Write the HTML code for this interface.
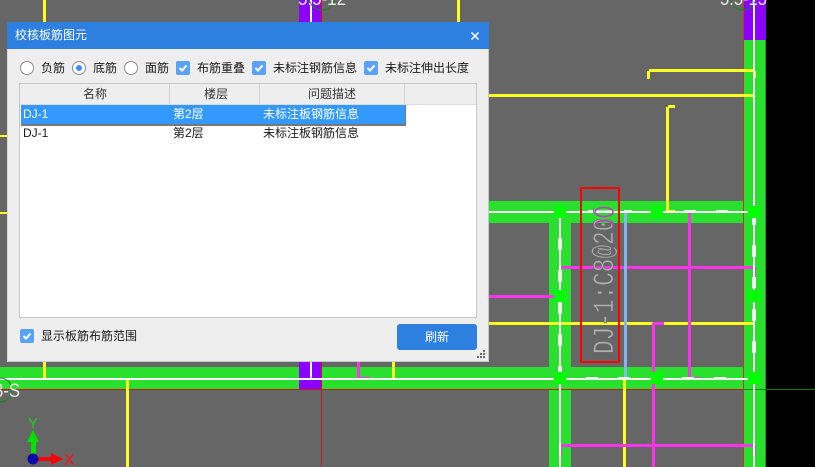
<!DOCTYPE html>
<html lang="zh">
<head>
<meta charset="utf-8">
<style>
html,body{margin:0;padding:0;background:#000;}
body{position:relative;width:815px;height:467px;overflow:hidden;font-family:"Liberation Sans","Noto Sans CJK SC",sans-serif;font-size:12px;color:#1a1a1a;}
svg.bg{position:absolute;left:0;top:0;}
#dlg{position:absolute;left:7px;top:22px;width:482px;height:340px;background:#eee;box-shadow:inset -1px 0 0 #c4c8cc,inset 1px 0 0 #d8d8d8,inset 0 -1px 0 #c4c8cc;}
.a{position:absolute;white-space:nowrap;line-height:16px;}
.title{position:absolute;left:0;top:0;width:482px;height:27px;background:#2d7fe0;}
.radio{position:absolute;width:12px;height:12px;border:1px solid #8f8f8f;border-radius:50%;background:#fff;}
.radio i{position:absolute;left:3px;top:3px;width:6px;height:6px;border-radius:50%;background:#3d8ff5;}
.cb{position:absolute;width:14px;height:14px;background:#5aa2f7;border-radius:2px;}
.cb svg{position:absolute;left:0;top:0;}
.table{position:absolute;left:12px;top:61px;width:456px;height:233px;background:#fff;border:1px solid #c6c6c6;border-top-color:#c6c6c6;}
.head{position:absolute;left:0;top:0;width:456px;height:20px;background:#eee;border-bottom:1px solid #dcdcdc;}
.sep{position:absolute;top:0;width:1px;height:20px;background:#d4d4d4;}
.sel{position:absolute;left:1px;top:21px;width:384px;height:19px;background:#3399ff;border-right:1px solid #777;border-bottom:2px solid #777;}
.btn{position:absolute;left:390px;top:302px;width:80px;height:26px;background:#2d7fe0;border-radius:3px;color:#fff;text-align:center;line-height:26px;}
.grip{position:absolute;background:#6c6c6c;width:2px;height:2px;}
</style>
</head>
<body>
<svg class="bg" width="815" height="467" viewBox="0 0 815 467" shape-rendering="crispEdges">
  <rect x="0" y="0" width="766" height="467" fill="#666666"/>
  <!-- green beams -->
  <rect x="0" y="367" width="743" height="22" fill="#2ae02e"/>
  <rect x="489" y="201" width="254" height="22" fill="#2ae02e"/>
  <rect x="549" y="201" width="22" height="266" fill="#2ae02e"/>
  <rect x="743" y="40" width="22" height="427" fill="#2ae02e"/>
  <rect x="765" y="40" width="1" height="427" fill="#1d9c20"/>
  <!-- purple -->
  <rect x="743" y="0" width="23" height="40" fill="#8b00ff"/>
  <rect x="299" y="0" width="23" height="22" fill="#8b00ff"/>
  <rect x="299" y="362" width="23" height="27" fill="#8b00ff"/>
  <!-- axis lines -->
  <rect x="743" y="0" width="1" height="467" fill="#c0392b"/>
  <rect x="321" y="0" width="1" height="467" fill="#d01020"/>
  <rect x="0" y="389" width="766" height="1" fill="#cc1414"/>
  <rect x="743" y="389" width="72" height="1" fill="#0c7a10"/>
  <!-- yellow lines -->
  <g fill="#ffff22">
    <rect x="0" y="135" width="7" height="2"/>
    <rect x="0" y="212" width="7" height="2"/>
    <rect x="43" y="0" width="3" height="22"/>
    <rect x="43" y="362" width="3" height="16"/>
    <rect x="126" y="378" width="3" height="89"/>
    <rect x="392" y="362" width="3" height="16"/>
    <rect x="457" y="0" width="3" height="22"/>
    <rect x="489" y="94" width="265" height="3"/>
    <rect x="649" y="69" width="106" height="3"/>
    <rect x="647" y="71" width="3" height="8"/>
    <rect x="753" y="71" width="3" height="7"/>
    <rect x="666" y="107" width="3" height="105"/>
    <rect x="668" y="105" width="7" height="3"/>
    <rect x="668" y="210" width="7" height="3"/>
    <rect x="489" y="322" width="266" height="3"/>
    <rect x="623" y="378" width="3" height="89"/>
  </g>
  <!-- magenta lines -->
  <g fill="#ff33ee">
    <rect x="489" y="295" width="65" height="3"/>
    <rect x="561" y="266" width="194" height="3"/>
    <rect x="753" y="267" width="3" height="10"/>
    <rect x="688" y="212" width="3" height="166"/>
    <rect x="688" y="377" width="12" height="3"/>
    <rect x="652" y="323" width="3" height="144"/>
    <rect x="653" y="322" width="11" height="3"/>
    <rect x="561" y="444" width="194" height="3"/>
    <rect x="561" y="445" width="1" height="11"/>
    <rect x="753" y="445" width="3" height="11"/>
    <rect x="357" y="362" width="3" height="16"/>
    <rect x="358" y="377" width="12" height="3"/>
  </g>
  <!-- blue line -->
  <rect x="624" y="212" width="3" height="166" fill="#8ab4f0"/>
  <!-- white centre lines -->
  <g fill="#ffffff">
    <rect x="489" y="211" width="265" height="2"/>
    <rect x="0" y="378" width="754" height="2"/>
    <rect x="559" y="212" width="2" height="255"/>
    <rect x="753" y="0" width="2" height="467"/>
    <rect x="310" y="0" width="2" height="22"/>
    <rect x="310" y="362" width="2" height="16"/>
  </g>
  <!-- thick dashes -->
  <g fill="#f2f2f2">
    <rect x="588" y="210" width="6" height="3"/>
    <rect x="624" y="210" width="8" height="3"/>
    <rect x="684" y="210" width="12" height="3"/>
    <rect x="716" y="210" width="12" height="3"/>
    <rect x="586" y="377" width="12" height="3"/>
    <rect x="618" y="377" width="12" height="3"/>
    <rect x="682" y="377" width="12" height="3"/>
    <rect x="714" y="377" width="12" height="3"/>
    <rect x="558" y="238" width="4" height="12"/>
    <rect x="558" y="270" width="4" height="12"/>
    <rect x="558" y="302" width="4" height="12"/>
    <rect x="558" y="334" width="4" height="12"/>
    <rect x="558" y="366" width="4" height="6"/>
    <rect x="752" y="218" width="4" height="7"/>
    <rect x="752" y="245" width="4" height="12"/>
    <rect x="752" y="277" width="4" height="11"/>
    <rect x="752" y="309" width="4" height="12"/>
    <rect x="752" y="341" width="4" height="12"/>
  </g>
  <!-- green nodes -->
  <g fill="#00ff00">
    <rect x="554" y="206" width="12" height="12"/>
    <rect x="651" y="206" width="12" height="12"/>
    <rect x="748" y="206" width="12" height="12"/>
    <rect x="554" y="290" width="12" height="12"/>
    <rect x="748" y="290" width="12" height="12"/>
    <rect x="554" y="372" width="12" height="12"/>
    <rect x="651" y="372" width="12" height="12"/>
    <rect x="748" y="372" width="12" height="12"/>
  </g>
  <!-- highlighted text -->
  <text transform="translate(613,354) rotate(-90)" font-family="Liberation Mono, monospace" font-size="30" fill="#b0b0b0" stroke="#666666" stroke-width="0.6" textLength="150" lengthAdjust="spacingAndGlyphs" shape-rendering="auto">DJ-1:C8@200</text>
  <g shape-rendering="auto" fill="none" stroke="#cc33cc" stroke-width="1.6">
    <rect x="594" y="205" width="20" height="14" fill="#2ae02e" stroke="none"/>
    <rect x="594" y="210.5" width="20" height="2.5" fill="#ffffff" stroke="none"/>
    <ellipse cx="604" cy="212" rx="9" ry="4.5"/>
    <path d="M595 225.5A9 5 0 0 1 613 225.5"/>
  </g>
  <!-- red box -->
  <rect x="581" y="188" width="38" height="174" fill="none" stroke="#ff0000" stroke-width="2"/>
  <!-- grid labels -->
  <g shape-rendering="auto">
    <circle cx="322" cy="-3" r="13" fill="none" stroke="#0f8a18" stroke-width="1"/>
    <text x="298" y="5" font-family="Liberation Sans, sans-serif" font-size="19" fill="#e8e8e8" textLength="48" lengthAdjust="spacingAndGlyphs">5.5-12</text>
    <circle cx="743" cy="-3" r="13" fill="none" stroke="#0f8a18" stroke-width="1"/>
    <text x="720" y="5" font-family="Liberation Sans, sans-serif" font-size="19" fill="#e8e8e8" textLength="47" lengthAdjust="spacingAndGlyphs">5.5-15</text>
    <circle cx="0" cy="390" r="12" fill="none" stroke="#0f8a18" stroke-width="1"/>
    <text x="-6" y="397" font-family="Liberation Sans, sans-serif" font-size="19" fill="#e8e8e8" textLength="26" lengthAdjust="spacingAndGlyphs">3-S</text>
  </g>
  <!-- axis gizmo -->
  <g shape-rendering="auto">
    <rect x="31" y="441" width="5" height="16" fill="#00e000"/>
    <polygon points="33,430 27,442 39,442" fill="#00e000"/>
    <rect x="36" y="457" width="16" height="4" fill="#ff0000"/>
    <polygon points="63,459 51,453 51,465" fill="#ff0000"/>
    <circle cx="33" cy="459" r="5.5" fill="#0a0aa8"/>
    <text x="28" y="428" font-family="Liberation Sans, sans-serif" font-size="15" fill="#18d018">Y</text>
    <text x="64" y="465" font-family="Liberation Sans, sans-serif" font-size="16" fill="#ff1010">X</text>
  </g>
</svg>

<div id="dlg">
  <div class="title"></div>
  <div class="a" style="left:8px;top:5px;color:#fff;">校核板筋图元</div>
  <svg style="position:absolute;left:463px;top:9px;" width="10" height="10" viewBox="0 0 10 10"><path d="M1.5 1.5L8.5 8.5M8.5 1.5L1.5 8.5" stroke="#fff" stroke-width="1.5" fill="none"/></svg>

  <div class="radio" style="left:13px;top:39px;"></div>
  <div class="a" style="left:34px;top:38px;">负筋</div>
  <div class="radio" style="left:65px;top:39px;"><i></i></div>
  <div class="a" style="left:86px;top:38px;">底筋</div>
  <div class="radio" style="left:117px;top:39px;"></div>
  <div class="a" style="left:138px;top:38px;">面筋</div>

  <div class="cb" style="left:169px;top:39px;"><svg width="14" height="14" viewBox="0 0 14 14"><path d="M3.5 7L6 9.5L10.5 4.5" stroke="#fff" stroke-width="2" fill="none"/></svg></div>
  <div class="a" style="left:190px;top:38px;">布筋重叠</div>
  <div class="cb" style="left:245px;top:39px;"><svg width="14" height="14" viewBox="0 0 14 14"><path d="M3.5 7L6 9.5L10.5 4.5" stroke="#fff" stroke-width="2" fill="none"/></svg></div>
  <div class="a" style="left:266px;top:38px;">未标注钢筋信息</div>
  <div class="cb" style="left:357px;top:39px;"><svg width="14" height="14" viewBox="0 0 14 14"><path d="M3.5 7L6 9.5L10.5 4.5" stroke="#fff" stroke-width="2" fill="none"/></svg></div>
  <div class="a" style="left:378px;top:38px;">未标注伸出长度</div>

  <div class="table">
    <div class="head"></div>
    <div class="sep" style="left:149px;"></div>
    <div class="sep" style="left:239px;"></div>
    <div class="sep" style="left:384px;"></div>
    <div class="a" style="left:63px;top:2px;color:#333;">名称</div>
    <div class="a" style="left:184px;top:2px;color:#333;">楼层</div>
    <div class="a" style="left:288px;top:2px;color:#333;">问题描述</div>
    <div class="sel"></div>
    <div class="a" style="left:3px;top:22px;color:#fff;">DJ-1</div>
    <div class="a" style="left:153px;top:22px;color:#fff;">第2层</div>
    <div class="a" style="left:243px;top:22px;color:#fff;">未标注板钢筋信息</div>
    <div class="a" style="left:3px;top:41px;">DJ-1</div>
    <div class="a" style="left:153px;top:41px;">第2层</div>
    <div class="a" style="left:243px;top:41px;">未标注板钢筋信息</div>
  </div>

  <div class="cb" style="left:13px;top:307px;"><svg width="14" height="14" viewBox="0 0 14 14"><path d="M3.5 7L6 9.5L10.5 4.5" stroke="#fff" stroke-width="2" fill="none"/></svg></div>
  <div class="a" style="left:34px;top:306px;">显示板筋布筋范围</div>
  <div class="btn">刷新</div>

  <div class="grip" style="left:476px;top:328px;"></div>
  <div class="grip" style="left:473px;top:331px;"></div>
  <div class="grip" style="left:476px;top:331px;"></div>
  <div class="grip" style="left:470px;top:334px;"></div>
  <div class="grip" style="left:473px;top:334px;"></div>
  <div class="grip" style="left:476px;top:334px;"></div>
</div>
</body>
</html>
